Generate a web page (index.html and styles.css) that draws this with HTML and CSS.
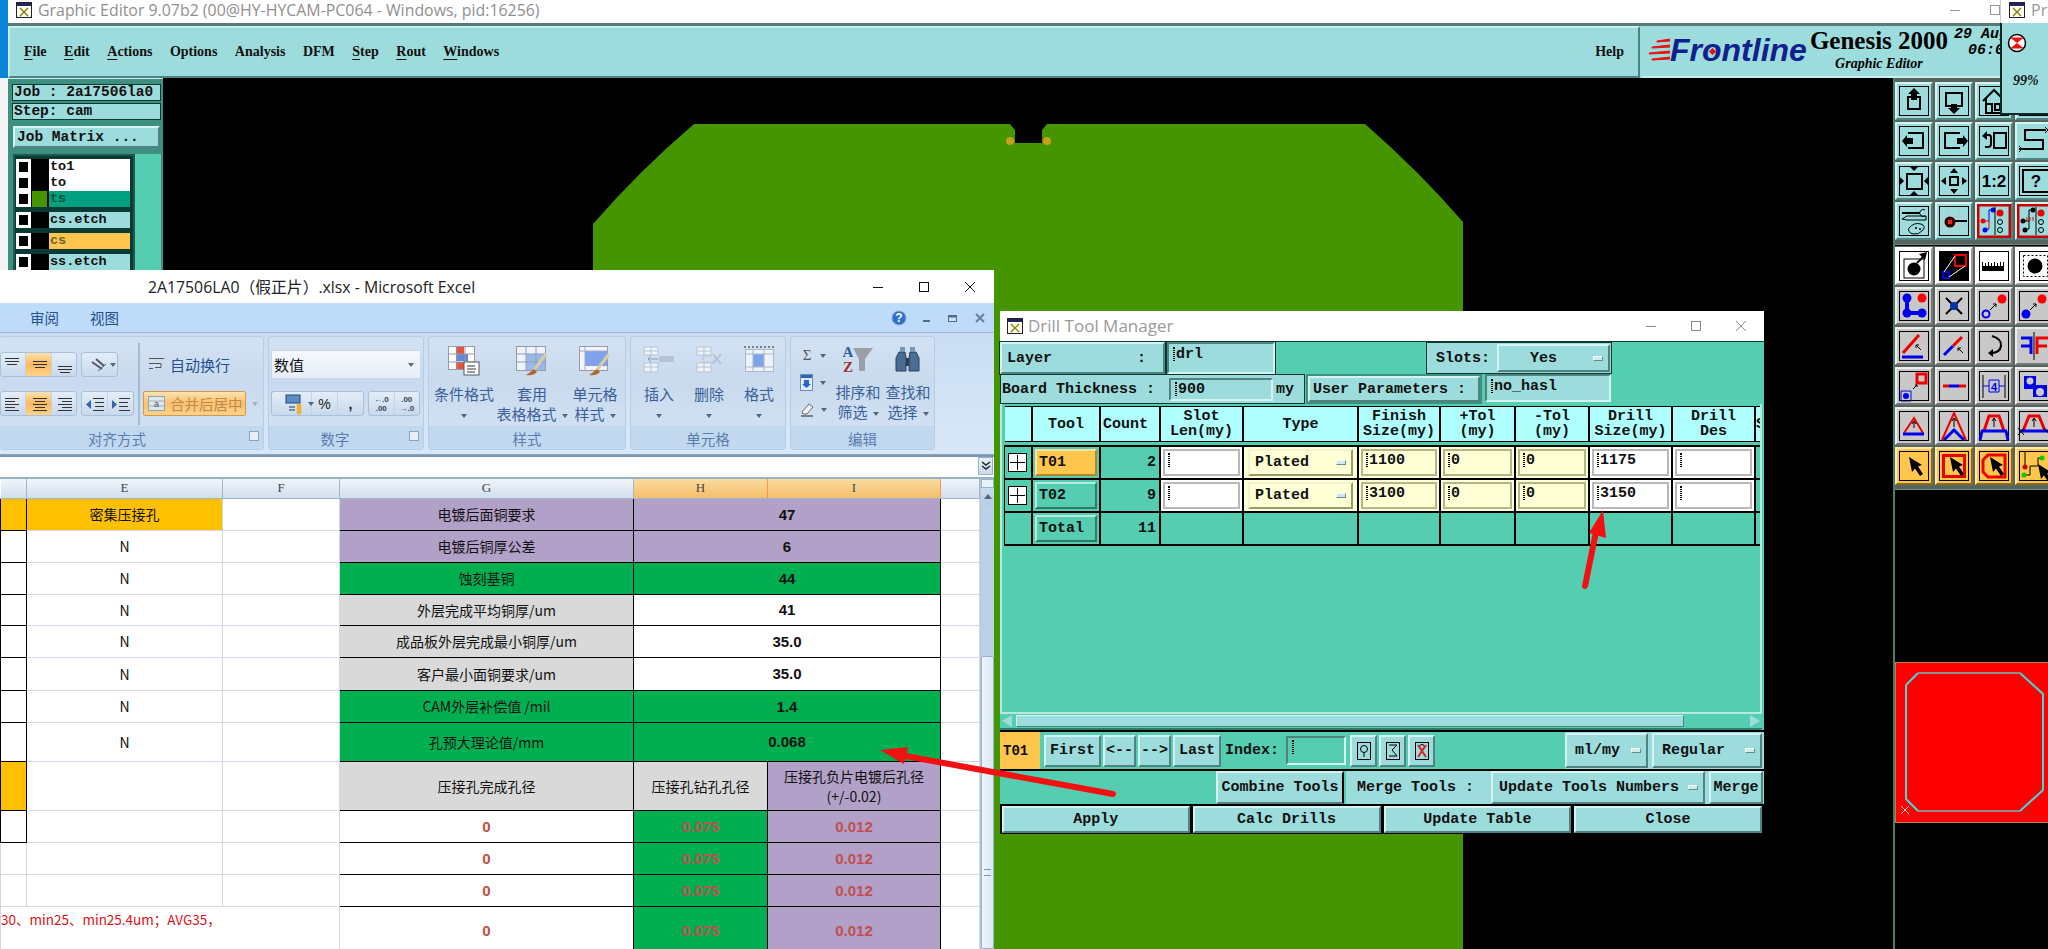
FILE: index.html
```html
<!DOCTYPE html>
<html lang="zh">
<head>
<meta charset="utf-8">
<title>Graphic Editor</title>
<link rel="stylesheet" href="styles.css">
</head>
<body>
<svg class="defs" width="0" height="0"><defs>
  <path id="cur" d="M0 0L3 15L6 11.5L11 19L14 17L9 9.5L13 8Z"/>
  <g id="xicon"><rect x=".5" y=".5" width="15" height="15" fill="#fff" stroke="#222"/><rect x="1" y="1" width="14" height="3" fill="#226"/><path d="M4 6l8 8M12 6l-8 8" stroke="#000" stroke-width="1.2"/><rect x="3" y="5" width="10" height="9" fill="#ff8" opacity=".45"/></g>
</defs></svg>
<div class="desktop">
  <div class="strip"><div class="strip-blue"></div><div class="strip-white"></div></div>
  <div class="main">
    <div class="titlebar">
      <svg class="ticon" width="16" height="16" viewBox="0 0 16 16"><use href="#xicon"/></svg>
      <span class="ttext">Graphic Editor 9.07b2 (00@HY-HYCAM-PC064 - Windows, pid:16256)</span>
      <span class="tctl tmin"></span><span class="tctl tmax"></span>
    </div>
    <div class="menubar">
      <div class="menu">
        <span class="mi"><u>F</u>ile</span><span class="mi"><u>E</u>dit</span><span class="mi"><u>A</u>ctions</span><span class="mi">Options</span><span class="mi">Analysis</span><span class="mi">DFM</span><span class="mi"><u>S</u>tep</span><span class="mi"><u>R</u>out</span><span class="mi"><u>W</u>indows</span>
        <span class="mi help">Help</span>
      </div>
      <div class="brand">
        <svg class="stripes" width="21" height="24" viewBox="0 0 21 24"><path d="M21 1L8 3V4L21 3ZM21 7L3 9V10L21 9ZM21 13L0 15V16L21 15ZM21 19L3 21V22L21 21Z" fill="#f01010" stroke="#f01010"/></svg>
        <span class="frontline">Fr<span class="flo">o</span>ntline</span>
        <div class="gen"><div class="gen-a">Genesis 2000</div><div class="gen-b">Graphic Editor</div></div>
        <div class="clock"><div class="clock-a">29 Aug</div><div class="clock-b">06:03</div></div>
      </div>
    </div>
    <div class="work">
      <div class="panel">
        <div class="plabel job">Job : 2a17506la0</div>
        <div class="plabel">Step: cam</div>
        <div class="pbtn">Job Matrix ...</div>
        <div class="layers">
          <div class="laylist">
            <div class="lay"><span class="chk"></span><span class="sw"></span><span class="lname white">to1</span></div>
            <div class="lay"><span class="chk"></span><span class="sw"></span><span class="lname white">to</span></div>
            <div class="lay"><span class="chk"></span><span class="sw on"></span><span class="lname teal">ts</span></div>
            <div class="lay sep"><span class="chk"></span><span class="sw"></span><span class="lname">cs.etch</span></div>
            <div class="lay sep"><span class="chk"></span><span class="sw"></span><span class="lname orange">cs</span></div>
            <div class="lay sep"><span class="chk"></span><span class="sw"></span><span class="lname">ss.etch</span></div>
          </div>
          <div class="layscroll"></div>
        </div>
      </div>
      <div class="canvas">
        <svg class="board" viewBox="163 78 1730 871" width="1730" height="871">
          <path d="M694 124H1010L1015 130V143H1042V130L1047 124H1365Q1420 172 1463 222V949H593V224Q640 170 694 124Z" fill="#449500"/>
          <circle cx="1010" cy="141" r="4" fill="#c9a01a"/><circle cx="1047" cy="141" r="4" fill="#c9a01a"/>
        </svg>
      </div>
      <div class="side">
        <div class="tools">
          <div class="tb"><svg viewBox="0 0 38 38"><rect class="fr" x="4.5" y="4.5" width="29" height="29"/><path class="s2" d="M13 15H25V27H13Z"/><path d="M19 6l6 6h-3v6h-6v-6h-3z"/></svg></div>
          <div class="tb"><svg viewBox="0 0 38 38"><rect class="fr" x="4.5" y="4.5" width="29" height="29"/><path class="s2" d="M11 11H27V24H11Z"/><path d="M19 32l6-6h-3v-4h-6v4h-3z"/></svg></div>
          <div class="tb"><svg viewBox="0 0 38 38"><rect class="fr" x="4.5" y="4.5" width="29" height="29"/><path class="s2" d="M8 19L19 8L30 19M11 17V31H27V17M17 31V22H12M20 22H25V28H20Z"/></svg></div>
          <div class="tb"><svg viewBox="0 0 38 38"><rect class="fr" x="4.5" y="4.5" width="29" height="29"/></svg></div>

          <div class="tb"><svg viewBox="0 0 38 38"><rect class="fr" x="4.5" y="4.5" width="29" height="29"/><path class="s2" d="M13 11H28V26H13"/><path d="M7 19l5-6v3h6v6h-6v3z"/></svg></div>
          <div class="tb"><svg viewBox="0 0 38 38"><rect class="fr" x="4.5" y="4.5" width="29" height="29"/><path class="s2" d="M25 11H10V26H25"/><path d="M33 19l-5-6v3h-6v6h6v3z"/></svg></div>
          <div class="tb"><svg viewBox="0 0 38 38"><rect class="fr" x="4.5" y="4.5" width="29" height="29"/><rect class="s2" x="19" y="11" width="12" height="15"/><path class="s2" d="M9 13h5q2 0 2 3v6q0 3-3 3h-3"/><path d="M7 14l5-5v9z"/></svg></div>
          <div class="tb"><svg viewBox="0 0 38 38"><path class="s2" d="M31 8H10V18H28V27H4"/><path class="s1" d="M30 5l3 3-3 3M4 24l3 3-3 3"/></svg></div>

          <div class="tb"><svg viewBox="0 0 38 38"><rect class="fr" x="4.5" y="4.5" width="29" height="29"/><rect class="s2" x="12" y="12" width="15" height="15"/><path d="M15 5h8l-4 4zM15 33h8l-4-4zM5 15v8l4-4zM33 15v8l-4-4z"/></svg></div>
          <div class="tb"><svg viewBox="0 0 38 38"><rect class="fr" x="4.5" y="4.5" width="29" height="29"/><rect class="s2" x="15" y="15" width="8" height="8"/><path d="M15 11h8l-4-5zM15 27h8l-4 5zM11 15v8l-5-4zM27 15v8l5-4z"/></svg></div>
          <div class="tb"><svg viewBox="0 0 38 38"><rect class="fr" x="4.5" y="4.5" width="29" height="29"/><text class="t12" x="19" y="25">1:2</text></svg></div>
          <div class="tb"><svg viewBox="0 0 38 38"><rect class="fr" x="4.5" y="4.5" width="29" height="29"/><rect class="s2" x="8" y="8" width="26" height="22"/><text class="t12" x="21" y="25">?</text></svg></div>

          <div class="tb"><svg viewBox="0 0 38 38"><rect class="fr" x="4.5" y="4.5" width="29" height="29"/><path class="s2" d="M7 11H25"/><path class="s1" d="M30 8a3.500 3.500 0 1 0 0 6M7 17L12 14H31V18H12Z"/><path class="s1" d="M14 26q5-6 12-4 5 2 2 6-4 5-10 4-6-2-4-6z"/><circle cx="21" cy="26" r="1"/><circle cx="25" cy="27" r="1"/></svg></div>
          <div class="tb"><svg viewBox="0 0 38 38"><rect class="fr" x="4.500" y="4.500" width="29" height="29"/><path class="pale" d="M5 14H33M5 24H33M14 5V33M24 5V33"/><path class="s2" d="M15 19H32"/><circle cx="15" cy="20" r="5.500" fill="#300"/><rect x="13" y="18" width="4" height="4" fill="#e22"/></svg></div>
          <div class="tb"><svg viewBox="0 0 38 38"><rect class="redfr" x="3" y="3" width="32" height="32"/><path class="rd" d="M8 19H14V27"/><path class="bl" d="M14 19V8H18M14 27H9"/><circle cx="8" cy="19" r="2.500" fill="#e00"/><circle cx="18" cy="8" r="2.500" fill="#00e"/><circle cx="10" cy="28" r="2.500" fill="#00e"/><circle cx="25" cy="11" r="3.500" fill="#e00"/><circle class="s1" cx="25" cy="20" r="2.500"/><circle class="s1" cx="25" cy="28" r="2.500"/><path class="s1" d="M20 5V33"/></svg></div>
          <div class="tb"><svg viewBox="0 0 38 38"><rect class="redfr" x="3" y="3" width="32" height="32"/><path class="s1" d="M8 19H14V27H9M14 19V8H18"/><path class="rd" d="M12 15V19M15 15V19M18 15V19"/><circle cx="8" cy="19" r="2.500"/><circle cx="18" cy="8" r="2.500"/><circle cx="10" cy="28" r="2.500"/><circle cx="26" cy="11" r="3.500" fill="#e00"/><circle class="s1" cx="26" cy="20" r="2.500"/><circle class="s1" cx="26" cy="28" r="2.500"/><path class="s1" d="M21 5V33"/></svg></div>
        </div>
        <div class="tools tools-b">
          <div class="tb wh"><svg viewBox="0 0 38 38"><rect class="fr" x="4.500" y="4.500" width="29" height="29"/><rect class="s1" x="9" y="12" width="20" height="19"/><circle cx="19" cy="22" r="6.500"/><path class="s2" d="M22 16L30 8"/><path d="M32 5l-8 2 6 6z"/></svg></div>
          <div class="tb wh"><svg viewBox="0 0 38 38"><rect x="4" y="4" width="30" height="30"/><rect class="rd2" x="20" y="8" width="11" height="11"/><rect class="bl2" x="8" y="25" width="6" height="6"/><path class="wl" d="M20 9L9 25M30 19L14 30"/></svg></div>
          <div class="tb wh"><svg viewBox="0 0 38 38"><rect class="fr" x="4.500" y="4.500" width="29" height="29"/><path d="M7 15h1v4h2v-3h1v3h2v-4h1v4h2v-3h1v3h2v-4h1v4h2v-3h1v3h2v-4h1v4h2v-4h1v9H7z"/></svg></div>
          <div class="tb wh"><svg viewBox="0 0 38 38"><rect class="fr" x="4.500" y="4.500" width="29" height="29"/><rect class="dash" x="8.500" y="8.500" width="24" height="21"/><circle cx="20" cy="19" r="7.500"/></svg></div>

          <div class="tb gr"><svg viewBox="0 0 38 38"><rect class="fr" x="4.500" y="4.500" width="29" height="29"/><path class="bl4" d="M12 11V26H27"/><circle cx="12" cy="11" r="4.500" fill="#00e"/><circle cx="12" cy="26" r="4.500" fill="#00e"/><circle cx="27" cy="26" r="4.500" fill="#00e"/><circle cx="27" cy="11" r="4.500" fill="#f00"/></svg></div>
          <div class="tb gr"><svg viewBox="0 0 38 38"><rect class="fr" x="4.500" y="4.500" width="29" height="29"/><path class="s2" d="M11 11L27 27M27 11L11 27"/><circle cx="19" cy="19" r="4" fill="#03a"/></svg></div>
          <div class="tb gr"><svg viewBox="0 0 38 38"><rect class="fr" x="4.500" y="4.500" width="29" height="29"/><circle class="blr" cx="11" cy="27" r="3.500"/><circle cx="27" cy="12" r="4.500" fill="#f00"/><path class="s1" d="M15 23L21 17M18 17H21V20"/></svg></div>
          <div class="tb gr"><svg viewBox="0 0 38 38"><rect class="fr" x="4.500" y="4.500" width="29" height="29"/><circle cx="11" cy="27" r="4.500" fill="#00e"/><circle cx="27" cy="12" r="4.500" fill="#f00"/><path class="s1" d="M15 23L21 17M18 17H21V20"/></svg></div>

          <div class="tb gr"><svg viewBox="0 0 38 38"><rect class="fr" x="4.500" y="4.500" width="29" height="29"/><path class="rd3" d="M8 26L24 8"/><path class="bl3" d="M7 30H28"/><path class="s1" d="M26 23L21 18M21 21V18H24"/></svg></div>
          <div class="tb gr"><svg viewBox="0 0 38 38"><rect class="fr" x="4.500" y="4.500" width="29" height="29"/><path class="bl3" d="M9 28L18 19"/><path class="rd3" d="M18 19L27 10"/><path class="s1" d="M28 26L23 21M23 24V21H26"/></svg></div>
          <div class="tb gr"><svg viewBox="0 0 38 38"><rect class="fr" x="4.500" y="4.500" width="29" height="29"/><path class="s2" d="M17 9Q27 12 26 19Q25 26 16 26"/><path d="M13 26l5-4v8z"/></svg></div>
          <div class="tb gr"><svg viewBox="0 0 38 38"><path class="bl3" d="M6 11H16V27M6 19H16"/><path class="rd3" d="M22 27V11H33M22 19H32"/><path class="s1" d="M19 5V33"/></svg></div>

          <div class="tb gr"><svg viewBox="0 0 38 38"><path class="blt" d="M6 24H16V34H6Z"/><circle cx="11" cy="29" r="3" fill="#00e"/><rect class="rd3" x="22" y="7" width="9" height="9"/><path class="s1" d="M18 22L22 18M20 18H22V20"/><rect class="fr" x="4.500" y="4.500" width="29" height="29"/></svg></div>
          <div class="tb gr"><svg viewBox="0 0 38 38"><rect class="fr" x="4.500" y="4.500" width="29" height="29"/><path class="rd3" d="M8 19H14M24 19H31"/><path class="bl3" d="M14 19H24"/></svg></div>
          <div class="tb gr"><svg viewBox="0 0 38 38"><rect class="fr" x="4.500" y="4.500" width="29" height="29"/><path class="s1" d="M8 8V31M30 8V31"/><path class="blt" d="M8 19H14M24 19H30M14 13H24V25H14Z"/><text class="t4" x="19" y="24">4</text></svg></div>
          <div class="tb gr"><svg viewBox="0 0 38 38"><rect class="fr" x="4.500" y="4.500" width="29" height="29"/><path d="M9 9H21V18H32V30H18V22H9Z" fill="#00e"/><circle cx="15" cy="14" r="3.500" fill="#ccc"/><circle cx="25" cy="25" r="4" fill="#ccc"/></svg></div>

          <div class="tb gr"><svg viewBox="0 0 38 38"><rect class="fr" x="4.500" y="4.500" width="29" height="29"/><path class="rd2" d="M9 26L19 11L28 26"/><path class="bl3" d="M8 27H29"/><path class="s1" d="M19 21V15M17 17L19 14L21 17"/></svg></div>
          <div class="tb gr"><svg viewBox="0 0 38 38"><rect class="fr" x="4.500" y="4.500" width="29" height="29"/><path class="rd2" d="M7 33L19 6L31 33"/><path class="bl3" d="M9 33L19 23L29 33"/><path class="s1" d="M19 20V12M17 14L19 11L21 14"/></svg></div>
          <div class="tb gr"><svg viewBox="0 0 38 38"><rect class="fr" x="4.500" y="4.500" width="29" height="29"/><path class="rd3" d="M9 24L14 9H24L29 24"/><path class="bl3" d="M6 24H32M7 24L5 33M31 24L33 33"/><path class="s1" d="M19 20V12M17 14L19 11L21 14"/></svg></div>
          <div class="tb gr"><svg viewBox="0 0 38 38"><rect class="fr" x="4.500" y="4.500" width="29" height="29"/><path class="rd3" d="M8 24L14 9H24L30 24"/><path class="bl3" d="M5 24H33"/><path class="s1" d="M19 20V12M17 14L19 11L21 14M3 21L9 28M9 21L3 28M29 21L35 28"/></svg></div>

          <div class="tb or"><svg viewBox="0 0 38 38"><rect class="fr" x="4.500" y="4.500" width="29" height="29"/><use href="#cur" x="14" y="10"/></svg></div>
          <div class="tb or"><svg viewBox="0 0 38 38"><rect class="fr" x="4.500" y="4.500" width="29" height="29"/><rect class="rd3" x="8.500" y="8.500" width="21" height="21"/><use href="#cur" x="15" y="10"/></svg></div>
          <div class="tb or"><svg viewBox="0 0 38 38"><rect class="fr" x="4.500" y="4.500" width="29" height="29"/><path class="rd3" d="M13 8H30V30H13L8 25V13Z"/><use href="#cur" x="15" y="10"/></svg></div>
          <div class="tb or"><svg viewBox="0 0 38 38"><rect class="fr" x="4.500" y="4.500" width="29" height="29"/><path class="s1" d="M10 5V20M8 28H15V19H23V11H27"/><circle cx="10" cy="20" r="2.500" fill="#c00"/><circle cx="9" cy="28" r="2.500" fill="#0c0"/><circle cx="27" cy="11" r="2.500" fill="#0c0"/><use href="#cur" x="23" y="17"/></svg></div>
        </div>
        <div class="side-gap"></div>
        <div class="preview">
          <svg viewBox="0 0 153 161" width="153" height="161">
            <path class="pv-c" d="M11 23L23 11M11 23V137L23 149M125 149L148 128V32L125 11"/>
            <path class="pv-g" d="M23 11H125M23 149H125"/>
            <path class="pv-x" d="M6 144L14 152M14 144L6 152"/>
          </svg>
        </div>
      </div>
    </div>
  </div>

  <!-- Excel window -->
  <div class="xl">
    <div class="xl-title">
      <span class="xl-ttext">2A17506LA0（假正片）.xlsx - Microsoft Excel</span>
      <div class="xl-ctl">
        <svg width="12" height="12" viewBox="0 0 12 12"><path d="M1 6.500H11" stroke="#111"/></svg>
        <svg width="12" height="12" viewBox="0 0 12 12"><rect x="1.500" y="1.500" width="9" height="9" fill="none" stroke="#111"/></svg>
        <svg width="12" height="12" viewBox="0 0 12 12"><path d="M1 1L11 11M11 1L1 11" stroke="#111"/></svg>
      </div>
    </div>
    <div class="xl-tabs">
      <span class="xl-tab">审阅</span><span class="xl-tab">视图</span>
      <div class="xl-tabctl">
        <svg width="16" height="16" viewBox="0 0 16 16"><circle cx="8" cy="8" r="7" fill="#2f6fd0" stroke="#8ab"/><text class="t-help" x="8" y="12">?</text></svg>
        <svg width="10" height="10" viewBox="0 0 10 10"><path d="M1 8H8" stroke="#4c6f90" stroke-width="2"/></svg>
        <svg width="12" height="10" viewBox="0 0 12 10"><rect x="1.500" y="2.500" width="8" height="6" fill="#cfe0f2" stroke="#4c6f90"/><path d="M2 3.500H9" stroke="#4c6f90" stroke-width="2"/></svg>
        <svg width="12" height="10" viewBox="0 0 12 10"><path d="M2 1L10 9M10 1L2 9" stroke="#66809a" stroke-width="2"/></svg>
      </div>
    </div>
    <div class="ribbon">
      <div class="g g-al">
        <div class="g-body al-body">
          <div class="al-rows">
            <div class="al-row">
              <div class="bgrp b77"><span class="ib"><svg width="24" height="24" viewBox="0 0 24 24"><path class="ln" d="M4 5.500H18M4 8.500H18M6 11.500H16"/></svg></span><span class="ib hot"><svg width="24" height="24" viewBox="0 0 24 24"><path class="ln" d="M7 8.500H21M7 11.500H21M9 14.500H19"/></svg></span><span class="ib"><svg width="24" height="24" viewBox="0 0 24 24"><path class="ln" d="M6 13.500H20M6 16.500H20M8 19.500H18"/></svg></span></div>
              <div class="bgrp b37"><span class="ib"><svg width="35" height="24" viewBox="0 0 35 24"><path d="M8 9L18 16M12 6L20 13" stroke="#556" stroke-width="2" fill="none"/><path d="M14 18L22 11" stroke="#36a" fill="none"/></svg><span class="car"></span></span></div>
            </div>
            <div class="al-row">
              <div class="bgrp b77"><span class="ib"><svg width="24" height="24" viewBox="0 0 24 24"><path class="ln" d="M4 6.500H18M4 9.500H14M4 12.500H18M4 15.500H14M4 18.500H18"/></svg></span><span class="ib hot"><svg width="24" height="24" viewBox="0 0 24 24"><path class="ln" d="M7 6.500H21M9 9.500H19M7 12.500H21M9 15.500H19M7 18.500H21"/></svg></span><span class="ib"><svg width="24" height="24" viewBox="0 0 24 24"><path class="ln" d="M6 6.500H20M10 9.500H20M6 12.500H20M10 15.500H20M6 18.500H20"/></svg></span></div>
              <div class="bgrp b53"><span class="ib"><svg width="26" height="24" viewBox="0 0 26 24"><path class="ln" d="M11 6.500H22M13 10.500H22M13 14.500H22M11 18.500H22"/><path d="M4 12.500L9 8V17Z" fill="#36a"/></svg></span><span class="ib"><svg width="26" height="24" viewBox="0 0 26 24"><path class="ln" d="M11 6.500H22M11 10.500H20M11 14.500H20M11 18.500H22"/><path d="M9 12.500L4 8V17Z" fill="#36a"/></svg></span></div>
            </div>
          </div>
          <div class="al-sep"></div>
          <div class="al-merge">
            <div class="wrap"><svg width="18" height="18" viewBox="0 0 18 18"><path d="M1 3.500H16M1 8.500H13V12.500H7M1 13.500H5" stroke="#555" fill="none"/></svg><span>自动换行</span></div>
            <div class="mergewrap"><div class="merge"><svg width="18" height="16" viewBox="0 0 18 16"><rect x=".5" y=".5" width="16" height="14" fill="#dbe7f3" stroke="#8aa"/><path d="M1 5H16M1 10H16" stroke="#aab"/><text class="t-a" x="8.500" y="11">a</text></svg><span>合并后居中</span></div><span class="car lt"></span></div>
          </div>
        </div>
        <div class="g-label"><span class="lab-al">对齐方式</span><span class="launch"></span></div>
      </div>
      <div class="g g-num">
        <div class="g-body num-body">
          <div class="combo"><span>数值</span><span class="car"></span></div>
          <div class="num-row">
            <div class="bgrp b93"><span class="ib w40"><svg width="24" height="22" viewBox="0 0 24 22"><rect x="5" y="2" width="14" height="8" fill="#5b8dc8" stroke="#247"/><path d="M8 14H14M8 17H14" stroke="#245"/><circle cx="18" cy="13" r="2.500" fill="#e9b23c"/><circle cx="18" cy="16" r="2.500" fill="#e9b23c"/><circle cx="18" cy="19" r="2.500" fill="#e9b23c"/></svg><span class="car"></span></span><span class="ib txt">%</span><span class="ib txt bold">,</span></div>
            <div class="bgrp b52"><span class="ib txs"><i>←.0</i><i>.00</i></span><span class="ib txs"><i>.00</i><i>→.0</i></span></div>
          </div>
        </div>
        <div class="g-label"><span class="lab-num">数字</span><span class="launch"></span></div>
      </div>
      <div class="g g-sty">
        <div class="g-body bigs">
          <div class="big w70">
            <svg class="bi" width="32" height="30" viewBox="0 0 32 30"><rect x=".5" y=".5" width="26" height="23" fill="#fff" stroke="#99a"/><rect x="8" y="1" width="8" height="7" fill="#e8513a"/><rect x="8" y="8" width="12" height="7" fill="#5c8ad8"/><rect x="8" y="16" width="10" height="7" fill="#e8513a"/><path d="M9 .5V24M17 .5V24M1 8H26M1 16H26" stroke="#99a" fill="none"/><rect x="16" y="16" width="15" height="13" fill="#fff" stroke="#556"/><path d="M19 20H27M19 23H28M19 26H27" stroke="#333"/></svg>
            <div class="bl-t">条件格式</div><div class="bl-t"><span class="car"></span></div>
          </div>
          <div class="big w68">
            <svg class="bi" width="32" height="30" viewBox="0 0 32 30"><rect x=".5" y=".5" width="29" height="24" fill="#eef3fb" stroke="#99a"/><rect x="10" y="8" width="19" height="16" fill="#9ab8ea"/><path d="M10 1V24M20 1V24M1 8H29M1 16H29" stroke="#8a9dbd" fill="none"/><path d="M30 8L18 24" stroke="#d9cda6" stroke-width="3"/><path d="M18 23Q12 28 10 29Q17 30 21 26Z" fill="#b0682a"/></svg>
            <div class="bl-t">套用</div><div class="bl-t">表格格式<span class="car ml"></span></div>
          </div>
          <div class="big w62">
            <svg class="bi" width="32" height="30" viewBox="0 0 32 30"><rect x=".5" y=".5" width="28" height="24" fill="#f1f4fa" stroke="#99a"/><rect x="6" y="5" width="22" height="15" fill="#7ea3ea"/><path d="M6 1V24M1 5H28" stroke="#aab" fill="none"/><path d="M30 8L18 24" stroke="#d9cda6" stroke-width="3"/><path d="M18 23Q12 28 10 29Q17 30 21 26Z" fill="#b0682a"/></svg>
            <div class="bl-t">单元格</div><div class="bl-t">样式<span class="car ml"></span></div>
          </div>
        </div>
        <div class="g-label">样式</div>
      </div>
      <div class="g g-cell">
        <div class="g-body bigs cellb">
          <div class="big w50">
            <svg class="bi" width="32" height="30" viewBox="0 0 32 30"><path d="M1 1H15V9H1ZM1 17H15V26H1Z" fill="#eef3fa" stroke="#b5c3d5"/><path d="M8 1V9M1 5H15M8 17V26M1 21H15" stroke="#b5c3d5"/><path d="M16 10H31V16H16Z" fill="#b5c3d5"/><path d="M15 13H5M8 10L5 13L8 16" stroke="#8a9ab0" fill="none"/></svg>
            <div class="bl-t">插入</div><div class="bl-t"><span class="car"></span></div>
          </div>
          <div class="big w50">
            <svg class="bi" width="32" height="30" viewBox="0 0 32 30"><path d="M4 1H18V9H4ZM4 17H18V26H4Z" fill="#eef3fa" stroke="#b5c3d5"/><path d="M11 1V9M4 5H18M11 17V26M4 21H18" stroke="#b5c3d5"/><path d="M10 10H22V16H10Z" fill="none" stroke="#a5b3c5" stroke-dasharray="1 1"/><path d="M20 8L28 18M28 8L20 18" stroke="#b5c3d5" stroke-width="2"/></svg>
            <div class="bl-t">删除</div><div class="bl-t"><span class="car"></span></div>
          </div>
          <div class="big w50">
            <svg class="bi" width="32" height="30" viewBox="0 0 32 30"><path d="M1 1H31" stroke="#222" stroke-dasharray="2 2"/><rect x="2.500" y="3.500" width="28" height="22" fill="#eef3fa" stroke="#aab8c8"/><rect x="10" y="8" width="11" height="13" fill="#7ea3ea"/><path d="M10 3V26M21 3V26M3 8H30M3 21H30" stroke="#aab8c8" fill="none"/></svg>
            <div class="bl-t">格式</div><div class="bl-t"><span class="car"></span></div>
          </div>
        </div>
        <div class="g-label">单元格</div>
      </div>
      <div class="g g-edit">
        <div class="g-body bigs editb">
          <div class="small-col">
            <div class="smi"><span class="sigma">Σ</span><span class="car"></span></div>
            <div class="smi"><svg width="14" height="17" viewBox="0 0 14 17"><rect x=".5" y=".5" width="12" height="16" fill="#dfe9f6" stroke="#6f8fb5"/><rect x="1" y="1" width="11" height="3" fill="#2a66b8"/><path d="M4 6H9V10H11L6.500 14L2 10H4Z" fill="#2a66c8"/></svg><span class="car"></span></div>
            <div class="smi"><svg width="15" height="15" viewBox="0 0 15 15"><path d="M2 10L9 2L13 5L7 12H3Z" fill="#f2f4f8" stroke="#667"/><path d="M1 14H13" stroke="#222"/></svg><span class="car"></span></div>
          </div>
          <div class="big w50">
            <svg class="bi" width="34" height="30" viewBox="0 0 34 30"><text class="t-az a" x="7" y="13">A</text><text class="t-az z" x="7" y="28">Z</text><path d="M12 4H32L24 15V27H18V15Z" fill="#9aa0a6"/></svg>
            <div class="bl-t">排序和</div><div class="bl-t">筛选<span class="car ml"></span></div>
          </div>
          <div class="big w50">
            <svg class="bi" width="30" height="30" viewBox="0 0 30 30"><path d="M3 27V14L6 8H12L13 14V27ZM16 27V14L17 8H23L26 14V27Z" fill="#4a6d94" stroke="#2a3f5a"/><path d="M13 14H16V22H13Z" fill="#2a3f5a"/><rect x="7" y="3" width="5" height="5" fill="#7a96b5"/><rect x="17" y="3" width="5" height="5" fill="#7a96b5"/></svg>
            <div class="bl-t">查找和</div><div class="bl-t">选择<span class="car ml"></span></div>
          </div>
        </div>
        <div class="g-label">编辑</div>
      </div>
    </div>
    <div class="xl-fbar">
      <div class="xl-fcollapse"><svg width="14" height="15" viewBox="0 0 14 15"><path d="M3 4L7 7L11 4M3 8L7 11L11 8" stroke="#222" stroke-width="1.500" fill="none"/></svg></div>
    </div>
    <div class="xl-sheet">
      <table class="grid">
        <colgroup><col class="cD"><col class="cE"><col class="cF"><col class="cG"><col class="cH"><col class="cI"><col class="cJ"></colgroup>
        <thead><tr class="rh"><th></th><th>E</th><th>F</th><th>G</th><th class="sel">H</th><th class="sel">I</th><th></th></tr></thead>
        <tbody>
          <tr class="r32"><td class="gold bk"></td><td class="gold">密集压接孔</td><td></td><td class="pur bk">电镀后面铜要求</td><td class="pur bk num" colspan="2">47</td><td></td></tr>
          <tr class="r32"><td class="bk"></td><td>N</td><td></td><td class="pur bk">电镀后铜厚公差</td><td class="pur bk num" colspan="2">6</td><td></td></tr>
          <tr class="r32"><td class="bk"></td><td>N</td><td></td><td class="grn bk">蚀刻基铜</td><td class="grn bk num" colspan="2">44</td><td></td></tr>
          <tr class="r31"><td class="bk"></td><td>N</td><td></td><td class="gry bk">外层完成平均铜厚/um</td><td class="bk num" colspan="2">41</td><td></td></tr>
          <tr class="r32"><td class="bk"></td><td>N</td><td></td><td class="gry bk">成品板外层完成最小铜厚/um</td><td class="bk num" colspan="2">35.0</td><td></td></tr>
          <tr class="r33"><td class="bk"></td><td>N</td><td></td><td class="gry bk">客户最小面铜要求/um</td><td class="bk num" colspan="2">35.0</td><td></td></tr>
          <tr class="r32"><td class="bk"></td><td>N</td><td></td><td class="grn bk">CAM外层补偿值 /mil</td><td class="grn bk num" colspan="2">1.4</td><td></td></tr>
          <tr class="r39"><td class="bk"></td><td>N</td><td></td><td class="grn bk">孔预大理论值/mm</td><td class="grn bk num" colspan="2">0.068</td><td></td></tr>
          <tr class="r49"><td class="gold bk"></td><td></td><td></td><td class="gry bk">压接孔完成孔径</td><td class="gry bk">压接孔钻孔孔径</td><td class="pur bk">压接孔负片电镀后孔径<br>(+/-0.02)</td><td></td></tr>
          <tr class="r32"><td class="bk"></td><td></td><td></td><td class="bk rnum">0</td><td class="grn bk rnum">0.075</td><td class="pur bk rnum">0.012</td><td></td></tr>
          <tr class="r32"><td></td><td></td><td></td><td class="bk rnum">0</td><td class="grn bk rnum">0.075</td><td class="pur bk rnum">0.012</td><td></td></tr>
          <tr class="r32"><td></td><td></td><td></td><td class="bk rnum">0</td><td class="grn bk rnum">0.075</td><td class="pur bk rnum">0.012</td><td></td></tr>
          <tr class="r62"><td class="note" colspan="3"><div class="note-t">30、min25、min25.4um；AVG35，</div></td><td class="bk rnum">0</td><td class="grn bk rnum">0.075</td><td class="pur bk rnum">0.012</td><td></td></tr>
        </tbody>
      </table>
      <div class="xl-vs">
        <div class="vs-top"></div>
        <div class="vs-up"></div>
        <div class="vs-trough"></div>
        <div class="vs-thumb"><span class="grip"></span></div>
      </div>
    </div>
  </div>

  <!-- Drill Tool Manager -->
  <div class="dr">
    <div class="dr-title">
      <svg width="16" height="16" viewBox="0 0 16 16"><use href="#xicon"/></svg>
      <span class="dr-ttext">Drill Tool Manager</span>
      <div class="dr-ctl">
        <svg width="12" height="12" viewBox="0 0 12 12"><path d="M1 6.500H11" stroke="#888"/></svg>
        <svg width="12" height="12" viewBox="0 0 12 12"><rect x="1.500" y="1.500" width="9" height="9" fill="none" stroke="#888"/></svg>
        <svg width="12" height="12" viewBox="0 0 12 12"><path d="M1 1L11 11M11 1L1 11" stroke="#888"/></svg>
      </div>
    </div>
    <div class="dr-r1">
      <div class="btn layer-btn"><span>Layer</span><span>:</span></div>
      <div class="fld lay-f"><i class="ib-caret"></i>drl</div>
      <div class="slots"><span class="slots-l">Slots:</span><div class="btn opt yes"><span class="yes-t">Yes</span><span class="dash-b"></span></div></div>
    </div>
    <div class="dr-r2">
      <div class="thick"><span class="th-l">Board Thickness :</span><div class="fld th-f"><i class="ib-caret"></i>900</div><span class="th-u">my</span></div>
      <div class="up"><div class="btn up-b">User Parameters :</div></div>
      <div class="fld up-f"><i class="ib-caret"></i>no_hasl</div>
    </div>
    <div class="dr-table">
      <div class="dhead">
        <div class="dh"></div><div class="dh">Tool</div><div class="dh dh-c">Count</div><div class="dh">Slot<br>Len(my)</div><div class="dh">Type</div><div class="dh">Finish<br>Size(my)</div><div class="dh">+Tol<br>(my)</div><div class="dh">-Tol<br>(my)</div><div class="dh">Drill<br>Size(my)</div><div class="dh">Drill<br>Des</div><div class="dh clip">S</div>
      </div>
      <div class="dbody">
        <div class="dc"><span class="plus"></span></div><div class="dc"><div class="btn tool hot-t">T01</div></div><div class="dc cnt">2</div><div class="dc wcell"><div class="wf"><i class="ib-caret"></i></div></div><div class="dc ycell"><div class="btn-y"><span>Plated</span><span class="dash-b"></span></div></div><div class="dc ycell"><div class="yf"><i class="ib-caret"></i>1100</div></div><div class="dc ycell"><div class="yf"><i class="ib-caret"></i>0</div></div><div class="dc ycell"><div class="yf"><i class="ib-caret"></i>0</div></div><div class="dc wcell"><div class="wf"><i class="ib-caret"></i>1175</div></div><div class="dc wcell"><div class="wf"><i class="ib-caret"></i></div></div><div class="dc"></div>
        <div class="dc"><span class="plus"></span></div><div class="dc"><div class="btn tool">T02</div></div><div class="dc cnt">9</div><div class="dc wcell"><div class="wf"><i class="ib-caret"></i></div></div><div class="dc ycell"><div class="btn-y"><span>Plated</span><span class="dash-b"></span></div></div><div class="dc ycell"><div class="yf"><i class="ib-caret"></i>3100</div></div><div class="dc ycell"><div class="yf"><i class="ib-caret"></i>0</div></div><div class="dc ycell"><div class="yf"><i class="ib-caret"></i>0</div></div><div class="dc wcell"><div class="wf"><i class="ib-caret"></i>3150</div></div><div class="dc wcell"><div class="wf"><i class="ib-caret"></i></div></div><div class="dc"></div>
        <div class="dc"></div><div class="dc"><div class="btn tool">Total</div></div><div class="dc cnt">11</div><div class="dc"></div><div class="dc"></div><div class="dc"></div><div class="dc"></div><div class="dc"></div><div class="dc"></div><div class="dc"></div><div class="dc"></div>
      </div>
    </div>
    <div class="dr-scroll"><span class="ar-l"></span><div class="thumb"></div><span class="ar-r"></span></div>
    <div class="dr-nav">
      <div class="cur-tool">T01</div>
      <div class="btn n57">First</div><div class="btn n33">&lt;--</div><div class="btn n33">--&gt;</div><div class="btn n48">Last</div>
      <span class="idx-l">Index:</span>
      <div class="fld idx-f"><i class="ib-caret"></i></div>
      <div class="btn n27"><svg width="14" height="18" viewBox="0 0 14 18"><rect x=".5" y=".5" width="13" height="17" fill="none" stroke="#000"/><circle cx="7" cy="7" r="3.500" fill="none" stroke="#000"/><path d="M7 10V15" stroke="#000"/></svg></div>
      <div class="btn n27"><svg width="14" height="18" viewBox="0 0 14 18"><rect x=".5" y=".5" width="13" height="17" fill="none" stroke="#000"/><path d="M3 3H11L6 8L11 14H3" fill="none" stroke="#000"/></svg></div>
      <div class="btn n27"><svg width="14" height="18" viewBox="0 0 14 18"><rect x=".5" y=".5" width="13" height="17" fill="none" stroke="#000"/><circle cx="7" cy="5" r="2.500" fill="none" stroke="#000"/><path d="M3 3L11 15M11 3L3 15" stroke="#e02020" stroke-width="2"/></svg></div>
      <div class="nav-right">
        <div class="btn opt ml"><span>ml/my</span><span class="dash-b"></span></div>
        <div class="btn opt reg"><span>Regular</span><span class="dash-b"></span></div>
      </div>
    </div>
    <div class="dr-merge">
      <div class="btn combine">Combine Tools</div>
      <div class="mpanel"><span class="m-l">Merge Tools :</span><div class="btn opt upd"><span>Update Tools Numbers</span><span class="dash-b"></span></div><div class="btn mergeb">Merge</div></div>
    </div>
    <div class="dr-actions">
      <div class="btn act">Apply</div><div class="btn act">Calc Drills</div><div class="btn act">Update Table</div><div class="btn act">Close</div>
    </div>
  </div>

  <!-- small progress window -->
  <div class="pro">
    <div class="pro-title"><svg width="16" height="16" viewBox="0 0 16 16"><use href="#xicon"/></svg><span>Pro</span></div>
    <div class="pro-body">
      <svg width="20" height="20" viewBox="0 0 20 20"><circle cx="10" cy="10" r="8.500" fill="#fff" stroke="#000" stroke-width="1.500"/><path d="M3 4.500H17L10 10ZM3 15.500H17L10 10Z" fill="#f01010"/></svg>
      <div class="pct">99%</div>
    </div>
  </div>

  <!-- annotations -->
  <svg class="arrows" width="2048" height="949" viewBox="0 0 2048 949">
    <path d="M1113 794L900 755" stroke="#f21010" stroke-width="6" stroke-linecap="round" fill="none"/>
    <path d="M880 750L908 747L904 764Z" fill="#f21010"/>
    <path d="M1585 586L1596 532" stroke="#f21010" stroke-width="6" stroke-linecap="round" fill="none"/>
    <path d="M1603 510L1589 533L1606 538Z" fill="#f21010"/>
  </svg>
</div>
</body>
</html>
```
FILE: styles.css
```css
* { box-sizing: border-box; }
html, body { margin: 0; padding: 0; background: #000; }
.defs { position: absolute; }
.desktop { position: relative; width: 2048px; height: 949px; overflow: hidden; background: #000; display: flex; font-family: "Liberation Mono", monospace; }

/* main window */
.strip { width: 8px; display: flex; flex-direction: column; }
.strip-blue { height: 78px; background: #0a84d8; }
.strip-white { flex: 1; background: #f4f4f4; }
.main { flex: 1; display: flex; flex-direction: column; min-width: 0; }
.titlebar { height: 23px; background: #fff; display: flex; align-items: center; padding: 0 0 3px 8px; }
.ttext { margin-left: 6px; font: 15.900px "Open Sans", "Liberation Sans", sans-serif; color: #8f8f8f; white-space: nowrap; }
.tctl { display: block; }
.tmin { margin-left: auto; width: 10px; height: 1px; background: #999; }
.tmax { margin-left: 30px; margin-right: 48px; width: 10px; height: 10px; border: 1px solid #999; }
.menubar { height: 55px; display: flex; background: #9ddcdc; border-top: 3px solid #557a78; }
.menu { width: 1632px; display: flex; align-items: center; gap: 17.500px; padding: 0 14px 0 14px; border: 2px solid; border-color: #c8eeee #4f8280 #4f8280 #c8eeee; font: bold 14px "Liberation Serif", serif; color: #111; }
.mi u { text-underline-offset: 3px; }
.help { margin-left: auto; }
.brand { flex: 1; margin-left: 2px; display: flex; align-items: flex-start; padding: 9px 0 0 7px; border-bottom: 2px solid #c8eeee; position: relative; overflow: hidden; }
.stripes { margin-top: 3px; flex: none; }
.frontline { font: italic bold 32px/30px "Liberation Sans", sans-serif; color: #10208c; white-space: nowrap; letter-spacing: 0; margin-top: 0; }
.flo { position: relative; display: inline-block; }
.flo::after { content: ""; position: absolute; left: 8px; top: 14px; width: 5px; height: 5px; background: #e01010; transform: rotate(45deg); }
.gen { margin: -8px 0 0 3px; width: 138px; text-align: center; color: #000; white-space: nowrap; }
.gen-a { font: bold 25px/28px "Liberation Serif", serif; }
.gen-b { font: italic bold 14px/18px "Liberation Serif", serif; margin-top: 0; }
.clock { margin: -8px 0 0 6px; font: italic bold 15px/16px "Liberation Mono", monospace; white-space: nowrap; color: #000; }
.clock-b { margin-left: 14px; }
.work { flex: 1; display: flex; min-height: 0; }

/* left panel */
.panel { width: 155px; background: #3d9080; display: flex; flex-direction: column; padding: 5px 2px 0 4px; border-top: 1px solid #c8eeee; }
.plabel { height: 17px; margin-bottom: 2px; background: #9ddcdc; border: 1px solid #0b3a33; font: bold 14.500px/15px "Liberation Mono", monospace; color: #111; padding-left: 1px; white-space: nowrap; overflow: hidden; }
.pbtn { margin: 4px 1px 0; height: 22px; background: #9ddcdc; border: 2px solid; border-color: #d5f3f3 #4f8280 #4f8280 #d5f3f3; font: bold 14.500px/18px "Liberation Mono", monospace; color: #111; padding-left: 2px; }
.layers { margin-top: 6px; display: flex; flex: 1; }
.laylist { width: 122px; background: #0a3a33; padding: 3px 3px 0 1px; display: flex; flex-direction: column; margin-left: 1px; border: 2px solid #1a5a50; }
.layscroll { flex: 1; background: #55cdb0; }
.lay { height: 16px; display: flex; align-items: stretch; gap: 1px; background: #000; flex: none; }
.lay.sep { margin-top: 5px; }
.chk { width: 15px; background: #000; border: 3px solid #fff; box-shadow: inset 0 0 0 1px #000; }
.sw { width: 15px; background: #000; }
.sw.on { background: #449500; }
.lname { flex: 1; margin-left: 1px; background: #9ddcdc; font: bold 13.500px/15px "Liberation Mono", monospace; padding-left: 1px; color: #111; }
.lname.white { background: #fff; }
.lname.teal { background: #00a080; color: #04533f; }
.lname.orange { background: #ffc64d; color: #663; }

/* canvas */
.canvas { flex: 1; position: relative; overflow: hidden; background: #000; }
.board { position: absolute; left: 0; top: 0; }

/* right tools */
.side { width: 155px; border-left: 2px solid #3f7f70; display: flex; flex-direction: column; overflow: hidden; }
.tools { display: grid; grid-template-columns: repeat(4, 38px); gap: 2px; background: #56665f; padding: 4px 0 4px 0; width: 153px; overflow: hidden; border-bottom: 1px solid #6d8a84; }
.tools-b { padding-top: 1px; border-top: 1px solid #000; }
.tb { width: 38px; height: 38px; background: #9ddcdc; border: 2px solid; border-color: #d5f3f3 #4f8280 #4f8280 #d5f3f3; overflow: hidden; position: relative; }
.tb.wh { background: #fff; border-color: #fff #999 #999 #fff; }
.tb.gr { background: #c8c8c8; border-color: #eee #777 #777 #eee; }
.tb.or { background: #ffc64d; border-color: #ffe9b0 #8a6a20 #8a6a20 #ffe9b0; }
.tb svg { display: block; width: 38px; height: 38px; margin: -2px; }
.fr, .s1, .s2, .pale, .rd, .bl, .redfr, .rd2, .rd3, .bl2, .bl3, .bl4, .blr, .blt, .wl, .dash { fill: none; }
.fr, .s1, .dash { stroke: #000; stroke-width: 1; }
.s2 { stroke: #000; stroke-width: 2; }
.pale { stroke: #b8c8c8; }
.rd { stroke: #e00; } .bl { stroke: #00e; }
.redfr { stroke: #c00; stroke-width: 3; }
.rd2 { stroke: #e00; stroke-width: 2; }
.rd3 { stroke: #e00; stroke-width: 3; }
.bl2 { stroke: #00e; stroke-width: 2; }
.bl3 { stroke: #00e; stroke-width: 3; }
.bl4 { stroke: #00e; stroke-width: 4; }
.blr { stroke: #00e; stroke-width: 2; }
.blt { stroke: #00e; stroke-width: 1; }
.wl { stroke: #fff; stroke-width: 1; }
.dash { stroke-dasharray: 2 2; }
.t12 { font: bold 17px "Liberation Sans", sans-serif; text-anchor: middle; fill: #000; }
.t4 { font: bold 11px "Liberation Sans", sans-serif; text-anchor: middle; fill: #00e; }
.side-gap { height: 172px; flex: none; }
.preview { height: 161px; background: #f00; border: 1px solid #b58a30; border-right: 0; flex: none; margin-left: 0; }
.preview svg { display: block; margin: -1px 0 0 -1px; }
.pv-c { fill: none; stroke: #40d8d8; stroke-width: 2; }
.pv-g { fill: none; stroke: #8f8f8f; stroke-width: 2; }
.pv-x { fill: none; stroke: #f6d0c0; stroke-width: 1; }

/* Excel window */
.xl { position: absolute; left: 0; top: 270px; width: 994px; height: 679px; display: flex; flex-direction: column; background: #bfdbfa; font-family: "Noto Sans CJK SC", "Liberation Sans", sans-serif; overflow: hidden; }
.xl-title { height: 33px; background: #fff; display: flex; align-items: center; flex: none; position: relative; }
.xl-ttext { margin-left: 148px; font: 15.800px "Open Sans", "Noto Sans CJK SC", sans-serif; color: #222; white-space: nowrap; }
.xl-ctl { margin-left: auto; display: flex; gap: 34px; padding-right: 18px; }
.xl-tabs { height: 29px; flex: none; background: #bfdbfa; display: flex; align-items: center; padding-left: 30px; gap: 31px; font-size: 14.500px; color: #23508f; }
.xl-tab { line-height: 20px; }
.xl-tabctl { margin-left: auto; display: flex; align-items: center; gap: 15px; padding-right: 8px; }
.t-help { font: bold 12px "Liberation Sans", sans-serif; fill: #fff; text-anchor: middle; }
.ribbon { height: 123px; flex: none; display: flex; gap: 4px; padding: 3px 57px 4px 0; background: linear-gradient(#c9ddf3, #d9e8f8); border-top: 1px solid #9db8d4; border-bottom: 1px solid #8aa3bc; }
.g { display: flex; flex-direction: column; background: linear-gradient(#d3e2f3 0, #c9daee 40%, #d4e4f5 100%); border: 1px solid #b6cde4; border-radius: 3px; overflow: hidden; flex: none; }
.g-body { flex: 1; display: flex; min-height: 0; }
.g-label { height: 23px; flex: none; background: #c2d8ef; color: #5a7db0; font-size: 14.500px; line-height: 25px; text-align: center; position: relative; }
.launch { position: absolute; right: 4px; top: 5px; width: 10px; height: 10px; border: 1px solid #8aa5c2; background: #e6eff9; }
.g-al { width: 264px; border-left: 0; }
.g-num { width: 156px; }
.g-sty { width: 198px; }
.g-cell { width: 156px; }
.g-edit { width: 145px; }
.lab-al { display: block; width: 234px; }
.lab-num { display: block; width: 132px; }
.car { display: inline-block; width: 0; height: 0; border: 3px solid transparent; border-top: 4px solid #55667a; border-bottom: 0; vertical-align: middle; }
.car.ml { margin-left: 5px; }
.car.lt { border-top-color: #9fb3c7; margin: 0 0 0 6px; }
.al-body { padding: 15px 0 0 0; }
.al-rows { width: 137px; display: flex; flex-direction: column; gap: 15px; }
.al-row { display: flex; gap: 4px; height: 24px; }
.bgrp { display: flex; border: 1px solid #a8c0d8; border-radius: 3px; background: linear-gradient(#e3edf8, #c8d9ec); height: 25px; overflow: hidden; flex: none; }
.ib { display: flex; align-items: center; justify-content: center; flex: 1; border-right: 1px solid #c3d3e4; min-width: 0; }
.ib:last-child { border-right: 0; }
.ib svg { display: block; flex: none; }
.ib.hot { background: linear-gradient(#fde3b0, #fbb95f 50%, #fdd28c); }
.ln { stroke: #333; stroke-width: 1; fill: none; }
.b77 { width: 77px; }
.b37 { width: 37px; }
.b53 { width: 53px; }
.b93 { width: 93px; }
.b52 { width: 52px; }
.b37 .car { margin-left: -9px; }
.al-sep { width: 2px; height: 82px; margin: -9px 0 0 1px; background: #a3bcd6; }
.al-merge { margin-left: 3px; display: flex; flex-direction: column; }
.wrap { height: 24px; display: flex; align-items: center; gap: 4px; padding-left: 5px; color: #23508f; font-size: 15px; margin-bottom: 15px; }
.mergewrap { display: flex; align-items: center; }
.merge { width: 103px; height: 25px; display: flex; align-items: center; gap: 4px; padding-left: 4px; border: 1px solid #d09a4c; border-radius: 2px; background: linear-gradient(#fde3b0, #fcbf6a 50%, #fdd28c); color: #bd8a52; font-size: 14.500px; white-space: nowrap; }
.merge svg { flex: none; }
.t-a { font: 9px "Liberation Sans", sans-serif; text-anchor: middle; fill: #555; }
.num-body { flex-direction: column; padding: 13px 2px 0; }
.combo { height: 29px; width: 150px; background: linear-gradient(#f6f9fd, #e6eef8); border: 1px solid #c7d8ea; display: flex; align-items: center; justify-content: space-between; padding: 0 6px 0 2px; font-size: 15px; color: #111; }
.num-row { display: flex; gap: 4px; margin-top: 12px; }
.ib.w40 { flex: none; width: 40px; gap: 1px; padding-left: 1px; }
.ib.w40 svg { margin-left: 10px; }
.ib.w40 .car { margin-left: 2px; }
.ib.txt { font: 14px "Liberation Sans", sans-serif; color: #222; }
.ib.bold { font-weight: bold; }
.ib.txs { flex-direction: column; font: bold 8px/9px "Liberation Sans", sans-serif; color: #345; }
.ib.txs i { font-style: normal; }
.bigs { padding-top: 9px; justify-content: flex-start; }
.big { flex: none; display: flex; flex-direction: column; align-items: center; color: #3a5f97; font-size: 15px; line-height: 20px; white-space: nowrap; }
.big .bi { height: 30px; margin-bottom: 8px; flex: none; display: block; }
.bl-t { height: 20px; text-align: center; }
.w70 { width: 70px; }
.w68 { width: 66px; }
.w62 { width: 60px; }
.w50 { width: 50px; }
.cellb { padding-left: 3px; }
.editb { padding-left: 9px; padding-top: 7px; }
.small-col { width: 33px; display: flex; flex-direction: column; gap: 4px; padding-top: 0; flex: none; margin-top: 0; }
.smi { height: 23px; display: flex; align-items: center; gap: 6px; color: #555; }
.sigma { font: 15px "Liberation Serif", serif; width: 14px; text-align: center; }
.t-az { font: bold 15px "Liberation Serif", serif; text-anchor: middle; }
.t-az.a { fill: #2f5f9f; } .t-az.z { fill: #9a3030; }
.xl-fbar { height: 24px; flex: none; background: #fff; border-bottom: 2px solid #9ab2c9; border-top: 2px solid #7d97b1; display: flex; justify-content: flex-end; padding-right: 1px; }
.xl-fcollapse { width: 15px; height: 18px; background: linear-gradient(#e6eff9, #c9d9ea); border: 1px solid #9ab2c9; }
.xl-fcollapse svg { display: block; }
.xl-sheet { flex: 1; display: flex; background: #fff; min-height: 0; overflow: hidden; }

table.grid { table-layout: fixed; border-collapse: collapse; width: 979px; flex: none; align-self: flex-start; font-size: 14px; color: #111; }
.cD { width: 26px; } .cE { width: 196px; } .cF { width: 117px; } .cG { width: 294px; } .cH { width: 134px; } .cI { width: 173px; } .cJ { width: 39px; }
.grid th { height: 19px; padding: 0; background: linear-gradient(#f0f4fa, #d2dfed); border-right: 1px solid #9eb6ce; border-bottom: 1px solid #9eb6ce; font: 13px "Liberation Serif", serif; color: #444; }
.grid th.sel { background: linear-gradient(#f9dca0, #f5bd68); border-right-color: #f2994a; }
.grid td { padding: 0; text-align: center; vertical-align: middle; border: 1px solid #d0d7e5; line-height: 20px; overflow: hidden; }
.grid td.bk { border: 1px solid #000; }
.r32 td { height: 32px; } .r31 td { height: 31px; } .r33 td { height: 33px; } .r39 td { height: 39px; } .r49 td { height: 49px; } .r62 td { height: 48px; }
.gold { background: #ffc000; }
.pur { background: #b1a0c7; }
.grn { background: #00b050; }
.gry { background: #d9d9d9; }
.grid td.num { font: bold 15px "Liberation Sans", sans-serif; }
.grid td.rnum { font: bold 15px "Liberation Sans", sans-serif; color: #c0504d; }
.grid td.note { vertical-align: top; text-align: left; color: #e01010; font-size: 13.500px; border-right: 1px solid #d0d7e5; }
.note-t { padding-top: 2px; white-space: nowrap; }
.xl-vs { flex: 1; display: flex; flex-direction: column; background: #cfe0f2; border-left: 1px solid #b3c8dd; align-items: stretch; }
.vs-top { height: 9px; flex: none; background: #e8f0f9; border: 1px solid #9ab2c9; }
.vs-up { height: 18px; flex: none; position: relative; background: linear-gradient(#c9dcf0, #b6cde6); }
.vs-up::after { content: ""; position: absolute; left: 3px; top: 6px; border: 4px solid transparent; border-bottom: 5px solid #567; border-top: 0; }
.vs-trough { height: 150px; flex: none; background: #bcd1e8; }
.vs-thumb { flex: 1; background: linear-gradient(90deg, #eef4fb, #dbe7f4); border: 1px solid #9ab2c9; border-radius: 2px; padding-top: 212px; display: flex; justify-content: center; }
.grip { width: 7px; height: 7px; border-top: 1px solid #7d92a8; border-bottom: 1px solid #7d92a8; }

/* Drill Tool Manager */
.dr { position: absolute; left: 1000px; top: 311px; width: 764px; height: 523px; background: #55cdb0; display: flex; flex-direction: column; font: bold 15px "Liberation Mono", monospace; color: #111; }
.dr-title { height: 30px; flex: none; background: #fff; display: flex; align-items: center; padding-left: 7px; padding-bottom: 1px; }
.dr-ttext { margin-left: 5px; font: 17px "Open Sans", "Liberation Sans", sans-serif; color: #9a9a9a; white-space: nowrap; }
.dr-ctl { margin-left: auto; display: flex; gap: 33px; padding-right: 17px; }
.btn { background: #9ddcdc; border: 2px solid; border-color: #d5f3f3 #4f8280 #4f8280 #d5f3f3; display: flex; align-items: center; justify-content: center; white-space: nowrap; }
.fld { background: #9ddcdc; border: 2px solid; border-color: #4f8280 #d5f3f3 #d5f3f3 #4f8280; display: flex; align-items: flex-start; line-height: 15px; padding: 2px 0 0 4px; }
.ib-caret { display: inline-block; width: 2px; height: 14px; border-left: 1px dotted #000; border-right: 1px dotted #000; margin-right: 1px; flex: none; font-style: normal; }
.dash-b { width: 10px; height: 5px; background: #d5e8e8; border: 1px solid; border-color: #f0ffff #5f8f8f #5f8f8f #f0ffff; flex: none; }
.dr-r1 { height: 33px; flex: none; display: flex; align-items: stretch; border-top: 1px solid #0a3a33; }
.layer-btn { width: 165px; justify-content: space-between; padding: 0 17px 0 5px; border-right-width: 2px; outline: 1px solid #0a3a33; }
.lay-f { width: 108px; margin-left: 2px; padding-top: 3px; outline: 1px solid #0a3a33; }
.slots { margin-left: 151px; width: 186px; background: #9ddcdc; border: 1px solid #0a3a33; display: flex; align-items: center; padding: 1px 1px 1px 9px; }
.slots-l { width: 61px; flex: none; }
.opt.yes { flex: 1; height: 100%; justify-content: space-between; padding: 0 5px 0 31px; }
.yes-t { flex: none; }
.dr-r2 { height: 30px; flex: none; display: flex; align-items: stretch; }
.thick { width: 305px; background: #9ddcdc; border: 1px solid #0a3a33; display: flex; align-items: center; padding-left: 1px; }
.th-l { width: 167px; flex: none; }
.th-f { width: 104px; height: 23px; }
.th-u { margin-left: 3px; }
.up { width: 176px; background: #3d9080; padding: 2px; margin-left: 1px; }
.up-b { height: 100%; justify-content: flex-start; padding-left: 3px; }
.up-f { width: 126px; margin-left: 3px; padding-top: 3px; height: 28px; }
.dr-table { flex: 1; min-height: 0; padding: 2px 0 0 3px; border-left: 2px solid #b5eadf; border-right: 2px solid #b5eadf; margin-right: 2px; width: 762px; }
.dhead, .dbody { display: grid; grid-template-columns: 26px 66px 58px 81px 113px 80px 73px 72px 81px 81px 4px; column-gap: 2px; background: #000; border: 0; }
.dhead { padding: 1px 0 1px 0; grid-auto-rows: 34px; }
.dbody { margin-top: 3px; margin-left: -1px; padding: 2px 0 2px 1px; row-gap: 2px; grid-auto-rows: 31px; }
.dh { background: #b0ffff; text-align: center; line-height: 15px; display: flex; align-items: center; justify-content: center; overflow: hidden; }
.dh.clip { justify-content: flex-start; }
.dh.dh-c { justify-content: flex-start; padding-left: 2px; }
.dc { background: #55cdb0; display: flex; align-items: center; min-width: 0; }
.cnt { justify-content: flex-end; padding-right: 3px; }
.plus { width: 19px; height: 19px; margin-left: 3px; background: linear-gradient(#000, #000) center/1px 15px no-repeat, linear-gradient(#000, #000) center/15px 1px no-repeat, #fff; border: 1px solid #000; }
.tool { width: 62px; height: 27px; margin-left: 2px; background: #55cdb0; justify-content: flex-start; padding-left: 2px; border-color: #b5eadf #2f7a68 #2f7a68 #b5eadf; }
.tool.hot-t { background: #ffc64d; border-color: #ffe3a0 #b5862a #b5862a #ffe3a0; }
.wcell { background: #fff; padding: 2px; }
.ycell { background: #ffffd6; padding: 2px; }
.wf, .yf { width: 100%; height: 100%; display: flex; align-items: flex-start; line-height: 15px; border: 2px solid; padding: 2px 0 0 3px; font-weight: bold; }
.wf { background: #fff; border-color: #b8b8b8; }
.yf { background: #ffffd6; border-color: #b5b58a; }
.btn-y { width: 100%; height: 100%; margin: 0 2px; border: 2px solid; border-color: #f3f3d0 #9a9a70 #9a9a70 #f3f3d0; background: #ffffd6; display: flex; align-items: center; justify-content: space-between; padding: 0 5px; }
.dr-scroll { height: 18px; flex: none; display: flex; align-items: center; padding: 0 2px; border-top: 2px solid #b5eadf; border-bottom: 2px solid #2f7a68; width: 762px; gap: 0; }
.thumb { width: 668px; height: 12px; background: #9ddcdc; border: 1px solid; border-color: #d5f3f3 #4f8280 #4f8280 #d5f3f3; flex: none; }
.ar-l { width: 0; height: 0; border: 6px solid transparent; border-right: 10px solid #9ddcdc; border-left: 0; margin-right: 4px; }
.ar-r { width: 0; height: 0; border: 6px solid transparent; border-left: 10px solid #9ddcdc; border-right: 0; margin-left: auto; }
.dr-nav { height: 41px; flex: none; display: flex; align-items: center; border-top: 2px solid #000; border-bottom: 2px solid #000; gap: 2px; background: #55cdb0; }
.cur-tool { width: 40px; height: 100%; background: #ffc64d; display: flex; align-items: center; padding-left: 3px; font-size: 14px; }
.n57 { width: 57px; height: 32px; margin-left: 2px; } .n33 { width: 33px; height: 32px; } .n48 { width: 48px; height: 32px; } .n27 { width: 27px; height: 32px; }
.idx-l { margin: 0 5px 0 2px; }
.idx-f { width: 60px; height: 29px; background: #55cdb0; margin-right: 2px; }
.nav-right { margin-left: auto; display: flex; gap: 4px; height: 100%; padding: 1px 2px 1px 0; background: #9ddcdc; }
.opt { justify-content: space-between; padding: 0 5px 0 8px; }
.opt.ml { width: 83px; }
.opt.reg { width: 110px; }
.dr-merge { height: 35px; flex: none; display: flex; justify-content: flex-end; border-bottom: 2px solid #000; }
.combine { width: 128px; border-color: #d5f3f3 #000 #4f8280 #d5f3f3; }
.mpanel { width: 418px; display: flex; align-items: center; background: #9ddcdc; margin-left: 2px; padding-left: 11px; }
.m-l { width: 134px; flex: none; }
.upd { width: 214px; height: 100%; padding: 0 5px 0 6px; }
.mergeb { width: 54px; height: 100%; margin-left: 4px; }
.dr-actions { height: 28px; flex: none; display: flex; gap: 3px; padding: 0 2px 1px; background: #000; }
.act { flex: 1; }

/* progress window */
.pro { position: absolute; left: 2000px; top: 0; width: 48px; height: 115px; display: flex; flex-direction: column; }
.pro-title { height: 23px; flex: none; background: #fff; display: flex; align-items: center; padding-left: 8px; gap: 6px; border-left: 1px solid #ccc; font: 16px "Open Sans", sans-serif; color: #999; padding-bottom: 3px; overflow: hidden; }
.pro-title svg { flex: none; }
.pro-body { flex: 1; background: #9ddcdc; border-left: 2px solid #0a2a28; border-bottom: 2px solid #0a2a28; padding: 10px 0 0 5px; }
.pro-body svg { display: block; }
.pct { margin: 20px 0 0 6px; font: italic bold 14px "Liberation Serif", serif; color: #111; }

.arrows { position: absolute; left: 0; top: 0; pointer-events: none; }
```
